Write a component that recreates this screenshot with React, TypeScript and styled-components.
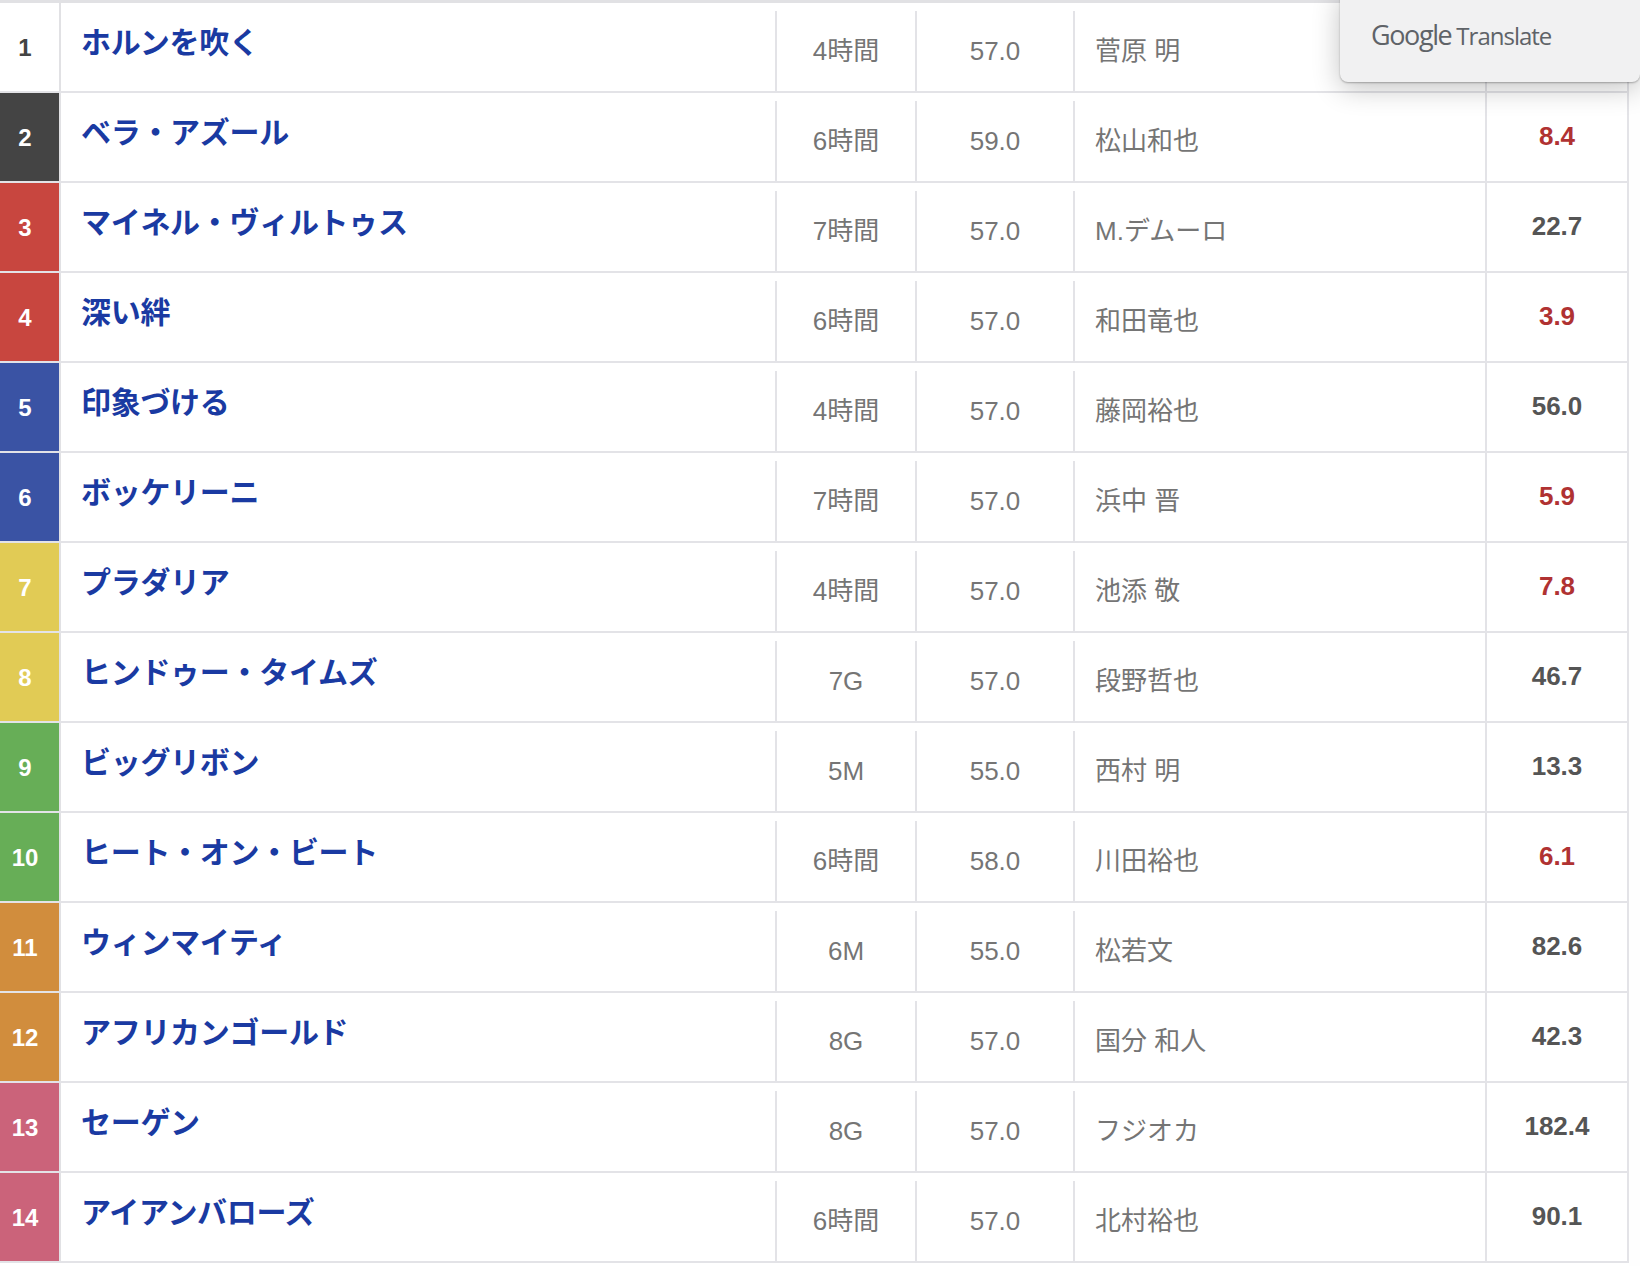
import React from 'react';
import styled, { createGlobalStyle } from 'styled-components';

type Runner = {
	no: number;
	colour: string;
	name: string;
	last: string;
	weight: string;
	jockey: string;
	odds: string;
	hot?: boolean;
};

const WHITE = '#ffffff';
const BLACK = '#444444';
const RED = '#c8463f';
const BLUE = '#3a53a4';
const YELLOW = '#e1cb55';
const GREEN = '#67ae57';
const ORANGE = '#d18d3d';
const PINK = '#cb637a';

const runners: Runner[] = [
	{ no: 1, colour: WHITE, name: 'ホルンを吹く', last: '4時間', weight: '57.0', jockey: '菅原 明', odds: '' },
	{ no: 2, colour: BLACK, name: 'ベラ・アズール', last: '6時間', weight: '59.0', jockey: '松山和也', odds: '8.4', hot: true },
	{ no: 3, colour: RED, name: 'マイネル・ヴィルトゥス', last: '7時間', weight: '57.0', jockey: 'M.デムーロ', odds: '22.7' },
	{ no: 4, colour: RED, name: '深い絆', last: '6時間', weight: '57.0', jockey: '和田竜也', odds: '3.9', hot: true },
	{ no: 5, colour: BLUE, name: '印象づける', last: '4時間', weight: '57.0', jockey: '藤岡裕也', odds: '56.0' },
	{ no: 6, colour: BLUE, name: 'ボッケリーニ', last: '7時間', weight: '57.0', jockey: '浜中 晋', odds: '5.9', hot: true },
	{ no: 7, colour: YELLOW, name: 'プラダリア', last: '4時間', weight: '57.0', jockey: '池添 敬', odds: '7.8', hot: true },
	{ no: 8, colour: YELLOW, name: 'ヒンドゥー・タイムズ', last: '7G', weight: '57.0', jockey: '段野哲也', odds: '46.7' },
	{ no: 9, colour: GREEN, name: 'ビッグリボン', last: '5M', weight: '55.0', jockey: '西村 明', odds: '13.3' },
	{ no: 10, colour: GREEN, name: 'ヒート・オン・ビート', last: '6時間', weight: '58.0', jockey: '川田裕也', odds: '6.1', hot: true },
	{ no: 11, colour: ORANGE, name: 'ウィンマイティ', last: '6M', weight: '55.0', jockey: '松若文', odds: '82.6' },
	{ no: 12, colour: ORANGE, name: 'アフリカンゴールド', last: '8G', weight: '57.0', jockey: '国分 和人', odds: '42.3' },
	{ no: 13, colour: PINK, name: 'セーゲン', last: '8G', weight: '57.0', jockey: 'フジオカ', odds: '182.4' },
	{ no: 14, colour: PINK, name: 'アイアンバローズ', last: '6時間', weight: '57.0', jockey: '北村裕也', odds: '90.1' },
];

const App: React.FC = () => {
	return (
		<>
			<GlobalStyle />
			<Table>
				{runners.map((r) => (
					<Row key={r.no}>
						<Rank $colour={r.colour}>{r.no}</Rank>
						<Name>{r.name}</Name>
						<Centered>{r.last}</Centered>
						<Centered>{r.weight}</Centered>
						<Jockey>{r.jockey}</Jockey>
						<Odds $hot={r.hot}>{r.odds}</Odds>
					</Row>
				))}
			</Table>
			<TranslatePopup>
				<GoogleWord>Google</GoogleWord>
				<TranslateWord>Translate</TranslateWord>
			</TranslatePopup>
		</>
	);
};

export default App;

const GlobalStyle = createGlobalStyle`
	body {
		margin: 0;
		background: #fefefe;
		font-family: 'Liberation Sans', 'Noto Sans CJK JP', sans-serif;
		overflow: hidden;
	}
`;

const Table = styled.div`
	width: 1629px;
	height: 1266px;
	background: #fff;
	border-top: 3px solid #e1e1e4;
	box-sizing: border-box;
	display: flex;
	flex-direction: column;
`;

const Row = styled.div`
	display: grid;
	grid-template-columns: 61px 714px 140px 158px 412px 144px;
	height: 90px;
	box-sizing: border-box;
	border-bottom: 2px solid #e3e3e7;
	flex: none;
`;

const Rank = styled.div<{ $colour: string }>`
	background: ${({ $colour }) => $colour};
	border-right: 2px solid #e1e1e4;
	color: ${({ $colour }) => ($colour === WHITE ? '#444' : '#fff')};
	font-size: 24px;
	font-weight: 700;
	display: flex;
	align-items: center;
	justify-content: center;
	padding: 1px 9px 0 0;
	box-sizing: border-box;
`;

const Name = styled.div`
	padding: 20px 0 0 20px;
	color: #1a3aa2;
	font-size: 30px;
	font-weight: 700;
	line-height: 40px;
	letter-spacing: -0.3px;
	white-space: nowrap;
`;

const InnerCell = styled.div`
	margin-top: 8px;
	border-left: 2px solid #e3e3e7;
	color: #757575;
	font-size: 26px;
	line-height: 36px;
	padding-top: 22px;
	box-sizing: border-box;
	white-space: nowrap;
`;

const Centered = styled(InnerCell)`
	text-align: center;
`;

const Jockey = styled(InnerCell)`
	padding-left: 20px;
`;

const Odds = styled.div<{ $hot?: boolean }>`
	border-left: 2px solid #e3e3e7;
	border-right: 2px solid #e3e3e7;
	color: ${({ $hot }) => ($hot ? '#b03232' : '#555')};
	font-size: 26px;
	font-weight: 700;
	display: flex;
	align-items: center;
	justify-content: center;
	padding-bottom: 1px;
	box-sizing: border-box;
`;

const TranslatePopup = styled.div`
	position: absolute;
	top: -10px;
	left: 1340px;
	width: 300px;
	height: 92px;
	box-sizing: border-box;
	padding: 26px 0 0 31px;
	background: #f1f1f2;
	border-radius: 8px;
	box-shadow: 0 6px 28px rgba(0, 0, 0, 0.24), 0 1px 2px rgba(0, 0, 0, 0.28);
	display: flex;
	align-items: baseline;
	gap: 5px;
	color: #5f6368;
	font-family: 'Open Sans', sans-serif;
`;

const GoogleWord = styled.span`
	font-size: 27px;
	letter-spacing: -1.4px;
`;

const TranslateWord = styled.span`
	font-size: 24px;
	letter-spacing: -1px;
`;
